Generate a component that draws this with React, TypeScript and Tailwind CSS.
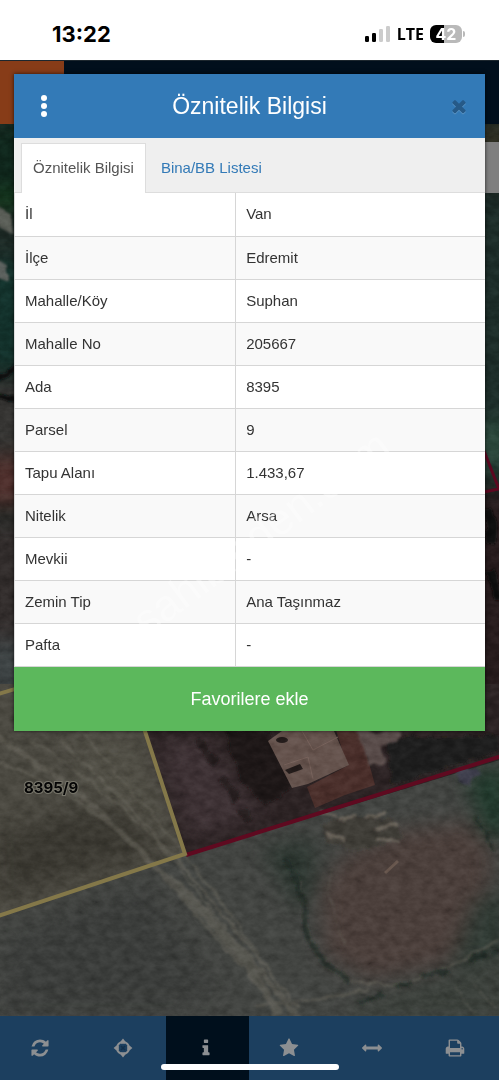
import { clsx } from "clsx"

interface IconProps {
  path: string;
  className?: string;
}

interface AttributeRow {
  label: string;
  value: string;
}

const icons = {
  refresh: "M1639 1056q0 5-1 7-64 268-268 434.5t-478 166.5q-146 0-282.5-55t-243.5-157l-129 129q-19 19-45 19t-45-19-19-45v-448q0-26 19-45t45-19h448q26 0 45 19t19 45-19 45l-137 137q71 66 161 102t187 36q134 0 250-65t186-179q11-17 53-117 8-23 30-23h192q13 0 22.5 9.5t9.5 22.5zm25-800v448q0 26-19 45t-45 19h-448q-26 0-45-19t-19-45 19-45l138-138q-148-137-349-137-134 0-250 65t-186 179q-11 17-53 117-8 23-30 23h-199q-13 0-22.5-9.5t-9.5-22.5v-7q65-268 270-434.5t480-166.5q146 0 284 55.5t245 156.5l130-129q19-19 45-19t45 19 19 45z",
  info: "M1216 1344v128q0 26-19 45t-45 19h-512q-26 0-45-19t-19-45v-128q0-26 19-45t45-19h64v-384h-64q-26 0-45-19t-19-45v-128q0-26 19-45t45-19h384q26 0 45 19t19 45v576h64q26 0 45 19t19 45zm-128-1152v192q0 26-19 45t-45 19h-256q-26 0-45-19t-19-45v-192q0-26 19-45t45-19h256q26 0 45 19t19 45z",
  star: "M1728 647q0 22-26 48l-363 354 86 500q1 7 1 20 0 21-10.5 35.5t-30.5 14.5q-19 0-40-12l-449-236-449 236q-22 12-40 12-21 0-31.5-14.5t-10.5-35.5q0-6 2-20l86-500-364-354q-25-27-25-48 0-37 56-46l502-73 225-455q19-41 49-41t49 41l225 455 502 73q56 9 56 46z",
  arrows: "M1792 896q0 26-19 45l-256 256q-19 19-45 19t-45-19-19-45v-128h-1024v128q0 26-19 45t-45 19-45-19l-256-256q-19-19-19-45t19-45l256-256q19-19 45-19t45 19 19 45v128h1024v-128q0-26 19-45t45-19 45 19l256 256q19 19 19 45z",
  print: "M448 1536h896v-256h-896v256zm0-640h896v-384h-160q-40 0-68-28t-28-68v-160h-640v640zm1152 64q0-26-19-45t-45-19-45 19-19 45 19 45 45 19 45-19 19-45zm128 0v416q0 13-9.5 22.5t-22.5 9.5h-224v160q0 40-28 68t-68 28h-960q-40 0-68-28t-28-68v-160h-224q-13 0-22.5-9.5t-9.5-22.5v-416q0-79 56.5-135.5t135.5-56.5h64v-544q0-40 28-68t68-28h672q40 0 88 20t76 48l152 152q28 28 48 76t20 88v256h64q79 0 135.5 56.5t56.5 135.5z",
  times: "M1490 1322q0 40-28 68l-136 136q-28 28-68 28t-68-28l-294-294-294 294q-28 28-68 28t-68-28l-136-136q-28-28-28-68t28-68l294-294-294-294q-28-28-28-68t28-68l136-136q28-28 68-28t68 28l294 294 294-294q28-28 68-28t68 28l136 136q28 28 28 68t-28 68l-294 294 294 294q28 28 28 68z",
}

const rows: AttributeRow[] = [
  { label: "İl", value: "Van" },
  { label: "İlçe", value: "Edremit" },
  { label: "Mahalle/Köy", value: "Suphan" },
  { label: "Mahalle No", value: "205667" },
  { label: "Ada", value: "8395" },
  { label: "Parsel", value: "9" },
  { label: "Tapu Alanı", value: "1.433,67" },
  { label: "Nitelik", value: "Arsa" },
  { label: "Mevkii", value: "-" },
  { label: "Zemin Tip", value: "Ana Taşınmaz" },
  { label: "Pafta", value: "-" },
]

function Icon({ path, className }: IconProps) {
  return (
    <svg viewBox="0 0 1792 1792" fill="currentColor" className={className} aria-hidden="true">
      <path d={path} />
    </svg>
  )
}

function TargetIcon() {
  return (
    <svg viewBox="0 0 20 20" className="size-5" fill="currentColor" aria-hidden="true">
      <circle cx="10" cy="10" r="6" fill="none" stroke="currentColor" strokeWidth="2" />
      <path d="M10 .6l2.2 2.6v2.6H7.8V3.2zM10 19.4l2.2-2.6v-2.6H7.8v2.6zM.6 10l2.6-2.2h2.6v4.4H3.2zM19.4 10l-2.6-2.2h-2.6v4.4h2.6z" />
      <path d="M8 8l4 4M12 8l-4 4" stroke="#14304a" strokeWidth="1.6" />
    </svg>
  )
}

function StatusBar() {
  return (
    <div className="flex h-15 items-center justify-between bg-white pt-2 pr-8.5 pl-13 font-['Inter',sans-serif] text-black">
      <span className="text-[22px] leading-6 font-bold">13:22</span>
      <div className="flex items-center gap-1.5">
        <svg viewBox="0 0 26 16" className="h-4 w-6.5" aria-hidden="true">
          <rect x="0" y="10" width="4" height="6" rx="1.2" />
          <rect x="7" y="7" width="4" height="9" rx="1.2" />
          <rect x="14" y="3" width="4" height="13" rx="1.2" fill="#ccc" />
          <rect x="21" y="0" width="4" height="16" rx="1.2" fill="#ccc" />
        </svg>
        <span className="font-['Open_Sans',sans-serif] text-base leading-5 font-bold">LTE</span>
        <div className="flex items-center gap-px">
          <span className="flex h-[18px] w-8 items-center justify-center rounded-md bg-linear-to-r from-black from-45% to-[#b9b9b9] to-45% text-base leading-4 font-bold text-white">
            42
          </span>
          <span className="h-1.5 w-0.5 rounded-r-full bg-[#b9b9b9]" />
        </div>
      </div>
    </div>
  )
}

function SatelliteMap() {
  return (
    <svg viewBox="0 124 499 892" preserveAspectRatio="xMidYMid slice" className="h-0 w-full flex-1 bg-[#1a2622]" role="img" aria-label="8395/9">
      <defs>
        <filter id="grain" x="0" y="0" width="100%" height="100%">
          <feTurbulence type="fractalNoise" baseFrequency="0.09 0.13" numOctaves="4" seed="7" />
          <feColorMatrix values="0.5 0 0 0 0  0.5 0 0 0 0  0.5 0 0 0 0  0 0 0 0 1" />
        </filter>
        <filter id="rough" x="-10%" y="-10%" width="120%" height="120%">
          <feTurbulence type="fractalNoise" baseFrequency="0.07" numOctaves="3" seed="3" result="n" />
          <feDisplacementMap in="SourceGraphic" in2="n" scale="9" xChannelSelector="R" yChannelSelector="G" />
          <feGaussianBlur stdDeviation="1" />
        </filter>
        <filter id="soft" x="-20%" y="-20%" width="140%" height="140%" colorInterpolationFilters="sRGB">
          <feGaussianBlur stdDeviation="10" />
        </filter>
      </defs>

      {/* ground */}
      <rect y="124" width="499" height="892" fill="#1b2723" />
      <g filter="url(#soft)">
        <rect x="-20" y="124" width="60" height="76" fill="#0e241a" />
        <rect x="-20" y="190" width="60" height="20" fill="#13351a" />
        <rect x="-20" y="260" width="60" height="110" fill="#12302a" />
        <rect x="-20" y="380" width="60" height="70" fill="#343331" />
        <rect x="-20" y="455" width="60" height="52" fill="#4c2d2a" />
        <rect x="-20" y="520" width="60" height="130" fill="#302b2a" />
        <rect x="-20" y="640" width="60" height="60" fill="#3b4142" />
        <rect x="460" y="124" width="60" height="30" fill="#2c2b1f" />
        <rect x="460" y="200" width="60" height="230" fill="#1b2b27" />
        <rect x="460" y="420" width="60" height="50" fill="#284438" />
        <rect x="460" y="490" width="60" height="250" fill="#251a1b" />
      </g>
      <path d="M-5 684L130 684 186 855-5 917z" fill="#48463e" />
      <path d="M-5 917L186 855 499 757 510 1020-5 1020z" fill="#40423f" />
      <path d="M130 684H510V757L186 855z" fill="#2a2122" />

      <g filter="url(#soft)">
        <path d="M158 745L192 838 262 816 200 735z" fill="#3c3033" />
        <path d="M0 835L110 805 165 845 0 895z" fill="#38362f" />
        <path d="M70 740L135 735 165 830 90 790z" fill="#4e4c43" />
        <path d="M10 935L145 885 215 985 190 1010 0 1010z" fill="#393b39" />
        <path d="M345 855L400 830 470 822 492 850 484 930 440 965 370 980 325 955 320 890z" fill="#493d39" />
        <path d="M262 848L315 838 312 900 295 905z" fill="#2a342e" />
        <path d="M465 775L510 765V840L485 835z" fill="#1e3629" />
        <path d="M475 900L510 885V950L450 970z" fill="#2e3832" />
        <path d="M350 1010L510 950V1020H350z" fill="#393e39" />
      </g>

      {/* tracks across the fields */}
      <g filter="url(#rough)" fill="none" stroke="#66645a" opacity=".55">
        <path d="M-5 735Q90 795 150 862 230 930 300 1020" strokeWidth="6" />
        <path d="M60 740Q140 815 190 875T300 1010" strokeWidth="3" />
        <path d="M0 762Q80 795 125 838T240 965" strokeWidth="3" />
        <path d="M85 735Q160 825 205 880L270 970" strokeWidth="2" />
        <path d="M30 740Q110 790 165 850L250 960" strokeWidth="2" />
        <path d="M170 880Q230 930 278 1015" strokeWidth="9" />
        <path d="M300 880Q303 935 325 965 350 985 385 985T499 940" strokeWidth="2" />
        <path d="M255 1006Q330 1000 370 988" strokeWidth="3" />
        <path d="M330 870Q325 910 345 945M455 985L475 1015M470 978L495 1010" strokeWidth="1" />
      </g>
      <g filter="url(#rough)" fill="none" stroke="#1e2621" opacity=".75">
        <path d="M285 860Q305 890 304 920 312 962 350 980" strokeWidth="5" />
        <path d="M360 1003L385 994M394 987L412 982M420 978L448 970M468 960L488 955M492 950H499" strokeWidth="5" />
        <path d="M478 815L493 850" strokeWidth="3" />
        <path d="M195 738L215 762M222 778L238 800M243 808L248 822M232 745L250 765" strokeWidth="8" stroke="#1c1514" />
      </g>

      {/* buildings and trees */}
      <g filter="url(#rough)">
        <path d="M225 730H270L296 786 265 805 240 780z" fill="#1e1817" />
        <path d="M385 738L499 735V752L392 785z" fill="#1f1e1b" />
        <path d="M322 822L345 816 390 818 404 836 370 850 325 843z" fill="#3c3a36" />
        <path d="M320 813L335 816M338 820L355 815M362 818L386 812M376 828L396 826M326 834L345 840M375 838L400 842" stroke="#686259" strokeWidth="3" />
      </g>
      <path d="M336 730H360L375 785 345 795 315 808 307 787 347 766z" fill="#482d29" />
      <path d="M268 741L282 731H334L349 765 308 784 292 788z" fill="#62504a" />
      <path d="M302 731L313 750M313 750L338 737M284 765L308 757 313 779" stroke="#725d56" fill="none" />
      <path d="M356 731H400L396 742 381 746 386 762 370 767z" fill="#574947" filter="url(#rough)" />
      <ellipse cx="282" cy="740" rx="6" ry="3" fill="#211a19" />
      <path d="M285 770L300 764 303 769 289 774z" fill="#211a19" />
      <path d="M455 770Q470 763 480 772L470 786 458 781z" fill="#3c3e4c" filter="url(#rough)" />
      <path d="M385 873L398 861" stroke="#65544b" strokeWidth="3" />

      {/* left and right edge detail */}
      <g filter="url(#rough)">
        <path d="M-4 205L10 215 14 235 0 228z" fill="#585b55" />
        <path d="M-4 262L8 265 8 278-4 278z" fill="#5a5f5b" />
        <path d="M-4 378L20 366M-4 395L20 400" stroke="#08100e" strokeWidth="5" />
        <path d="M484 510Q495 525 490 545M488 570L499 600" stroke="#0f0d0d" strokeWidth="9" />
      </g>

      <rect y="124" width="499" height="892" filter="url(#grain)" opacity=".5" className="mix-blend-soft-light" />

      {/* parcel borders */}
      <path d="M484 451L499 489 484 492" fill="none" stroke="#5c0820" strokeWidth="3" />
      <path d="M186 855L505 755" stroke="#5f0a20" strokeWidth="4" />
      <path d="M-5 695L130 655M140 716L185 854-5 917" fill="none" stroke="#847849" strokeWidth="4" />
      <rect x="485" y="142" width="14" height="51" fill="#7f7f7f" />
      <text x="24" y="793" fill="#050505" stroke="#77756a" strokeWidth="2" paintOrder="stroke" className="font-['Inter',sans-serif] text-[15px] font-bold">
        8395/9
      </text>
    </svg>
  )
}

function AttributeDialog() {
  return (
    <section role="dialog" aria-label="Öznitelik Bilgisi" className="flex flex-col bg-white shadow-[0_0_4px_rgba(0,0,0,0.7)]">
      <header className="flex h-16 items-center justify-between bg-[#337ab7] px-2.5 text-white">
        <button type="button" aria-label="Menü" className="flex w-10 justify-center">
          <svg viewBox="0 0 6 22" fill="currentColor" className="h-[22px] w-1.5" aria-hidden="true">
            <circle cx="3" cy="3" r="3" />
            <circle cx="3" cy="11" r="3" />
            <circle cx="3" cy="19" r="3" />
          </svg>
        </button>
        <h1 className="text-[23px] leading-8">Öznitelik Bilgisi</h1>
        <button type="button" aria-label="Kapat" className="flex w-10 justify-end pr-1.5 text-[#265a88]">
          <Icon path={icons.times} className="size-5 drop-shadow-[0_1px_0_#5b95c5]" />
        </button>
      </header>

      <nav className="flex border-b border-[#ddd] bg-[#efefef] px-[7px] pt-[5px] text-[15px] leading-5">
        <a href="#bilgi" aria-current="page" className="-mb-px border border-b-0 border-[#ddd] bg-white px-[11px] pt-3.5 pb-[15px] text-[#555]">
          Öznitelik Bilgisi
        </a>
        <a href="#liste" className="px-[15px] pt-[15px] pb-3.5 text-[#337ab7]">
          Bina/BB Listesi
        </a>
      </nav>

      <table className="w-full table-fixed border-l border-[#ddd] text-left text-[15px] leading-5 text-[#333]">
        <tbody>
          {rows.map((row) => (
            <tr key={row.label} className="h-[43px] odd:bg-white even:bg-[#f9f9f9]">
              <th scope="row" className="w-[47%] border-r border-b border-[#d6d6d6] px-2.5 font-normal">
                {row.label}
              </th>
              <td className="border-b border-[#d6d6d6] px-2.5">{row.value}</td>
            </tr>
          ))}
        </tbody>
      </table>

      <button type="button" className="h-16 bg-[#5cb85c] text-lg text-white">
        Favorilere ekle
      </button>
    </section>
  )
}

function Toolbar() {
  const items = [
    { label: "Yenile", icon: <Icon path={icons.refresh} className="size-5" /> },
    { label: "Konum", icon: <TargetIcon /> },
    { label: "Bilgi", icon: <Icon path={icons.info} className="size-5" />, active: true },
    { label: "Favoriler", icon: <Icon path={icons.star} className="size-5" /> },
    { label: "Ölçüm", icon: <Icon path={icons.arrows} className="size-5" /> },
    { label: "Yazdır", icon: <Icon path={icons.print} className="size-5" /> },
  ]

  return (
    <nav className="relative grid h-16 grid-cols-6 bg-[#1c3f5f] text-[#8c8f92]">
      {items.map((item) => (
        <button
          key={item.label}
          type="button"
          aria-label={item.label}
          className={clsx("flex items-center justify-center pr-1", item.active && "bg-[#000f1c]")}
        >
          {item.icon}
        </button>
      ))}
      {/* home indicator */}
      <span className="absolute bottom-2.5 left-1/2 h-1.5 w-[178px] -translate-x-1/2 rounded-full bg-white" />
    </nav>
  )
}

export default function App() {
  return (
    <div className="flex min-h-screen flex-col font-['Liberation_Sans',Arial,sans-serif]">
      <StatusBar />
      <main className="grid flex-1 grid-cols-1">
        <div className="col-start-1 row-start-1 flex flex-col">
          <div className="flex h-16 border-t border-[#1d272e] bg-[#010f1c]">
            <div className="w-16 bg-[#873c18]" />
          </div>
          <SatelliteMap />
        </div>
        <div className="relative col-start-1 row-start-1 self-start p-3.5">
          <AttributeDialog />
          <div aria-hidden="true" className="pointer-events-none absolute inset-x-0 top-[453px] flex justify-center pl-6">
            <span className="-rotate-37 text-[44px] leading-10 text-white/35">sahibinden.com</span>
          </div>
        </div>
      </main>
      <Toolbar />
    </div>
  )
}
